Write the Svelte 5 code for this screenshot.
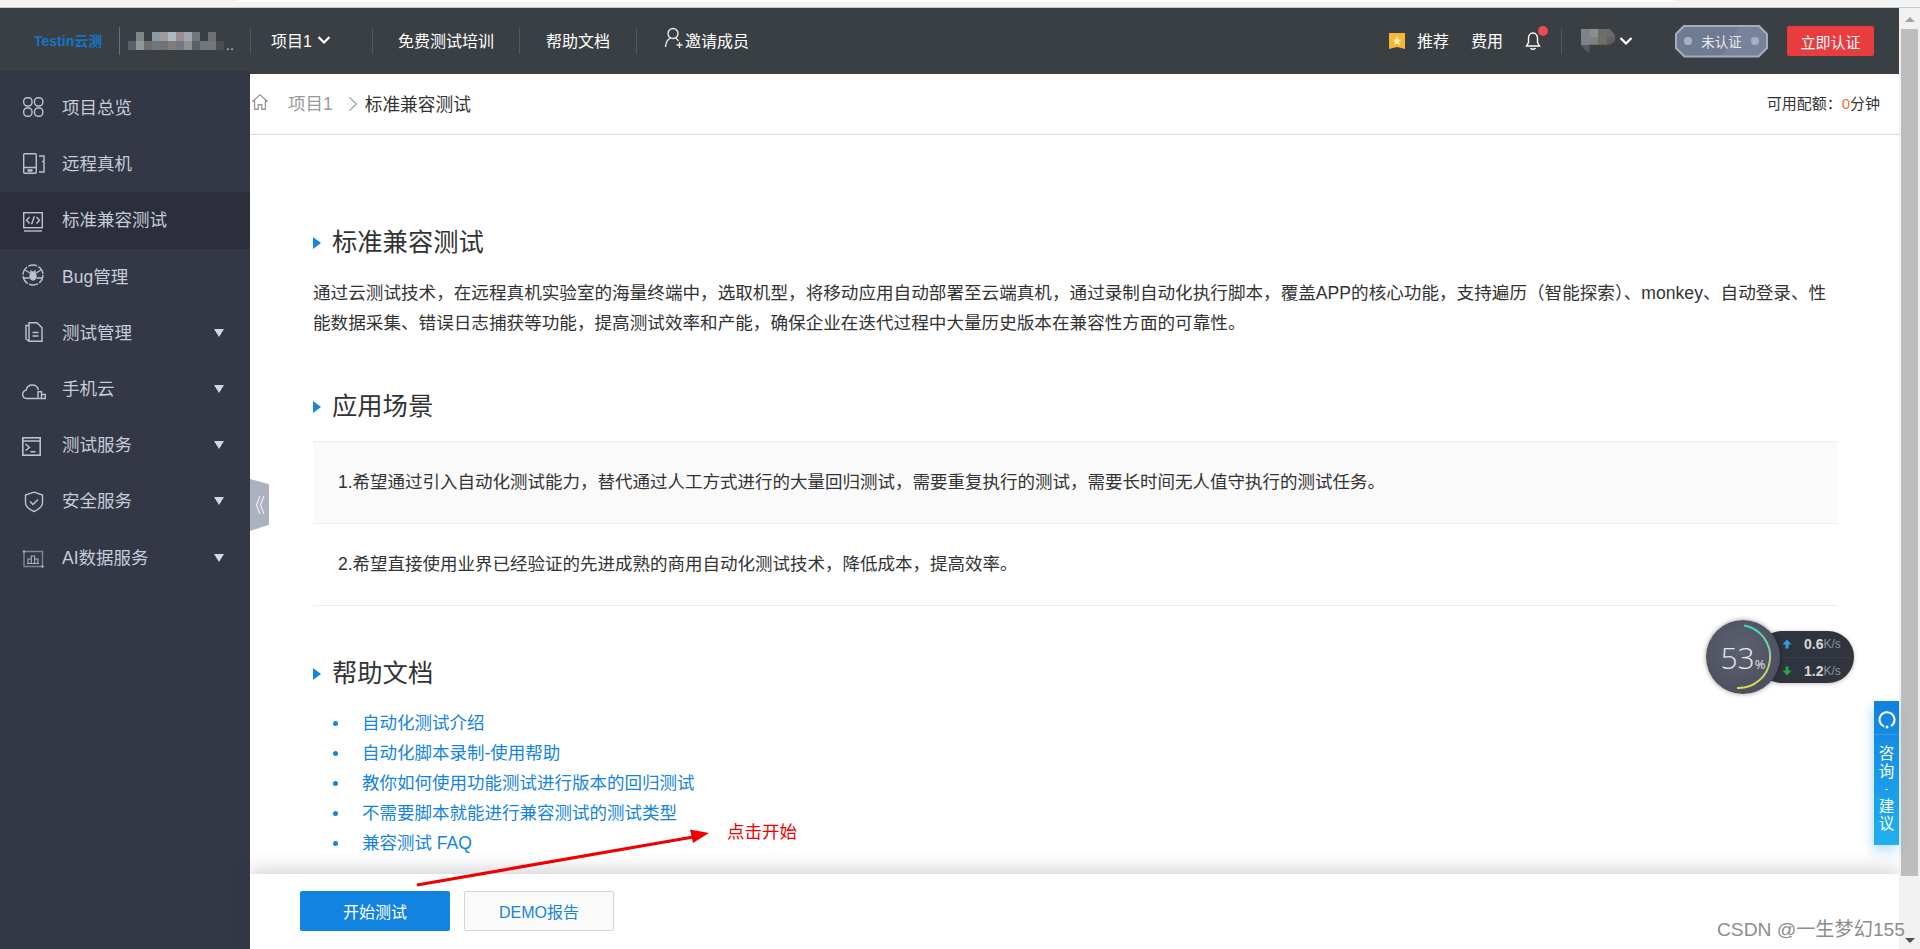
<script>
  const navItems = [
    { label: "项目总览", icon: "grid" },
    { label: "远程真机", icon: "device" },
    { label: "标准兼容测试", icon: "code", active: true },
    { label: "Bug管理", icon: "bug" },
    { label: "测试管理", icon: "doc", arrow: true },
    { label: "手机云", icon: "cloud", arrow: true },
    { label: "测试服务", icon: "term", arrow: true },
    { label: "安全服务", icon: "shield", arrow: true },
    { label: "AI数据服务", icon: "chart", arrow: true }
  ];

  const helpLinks = [
    "自动化测试介绍",
    "自动化脚本录制-使用帮助",
    "教你如何使用功能测试进行版本的回归测试",
    "不需要脚本就能进行兼容测试的测试类型",
    "兼容测试 FAQ"
  ];

  // mosaic over the account name
  const none = "transparent";
  const blurCells = [
    none, "#808587", none, "#8c98a4", "#a09a9e", "#a8bcc4", "#9a8c94", "#a4a4b0", "#6f7880", none, "#6f7070", none,
    "#55626c", "#929898", "#726c72", "#70767a", "#70737a", "#7f8070", "#727886", "#8e928c", "#5a6065", "#70767c", "#747878", "#4a4f52"
  ];
  const avatarCells = [
    "#7d8387", "#8e8e8e", "#6d6d6d", "#6a6a6a",
    "#7e8286", "#7f7f7f", "#706c6a", "#5f6063",
    "#555a5e", "#50565a", none, none
  ];
</script>

<div class="page">
  <div class="chrome"><div class="chrome-tab"></div></div>

  <div class="body">
    <div class="main">
      <header class="topbar">
        <span class="logo">Testin云测</span>
        <span class="vline logo-line"></span>
        <div class="mosaic">
          {#each blurCells as c}
            <i style="background:{c}"></i>
          {/each}
        </div>
        <span class="dots">..</span>
        <span class="vline"></span>
        <span class="tn project">项目1
          <svg class="chev" viewBox="0 0 14 10"><path d="M1.5 2 7 7.5 12.5 2" fill="none" stroke="#fff" stroke-width="2.2"/></svg>
        </span>
        <span class="vline"></span>
        <span class="tn train">免费测试培训</span>
        <span class="vline"></span>
        <span class="tn help">帮助文档</span>
        <span class="vline"></span>
        <span class="tn invite">
          <svg class="user" viewBox="0 0 20 22"><circle cx="9" cy="6.5" r="5" fill="none" stroke="#e8eaec" stroke-width="1.4"/><path d="M1.5 20c.5-5 3-8 5-8.8M11.5 11.2c1.2.5 2.3 1.5 3 2.8" fill="none" stroke="#e8eaec" stroke-width="1.4"/><path d="M12.5 18h6M15.5 15v6" stroke="#e8eaec" stroke-width="1.4"/></svg>
          邀请成员
        </span>

        <div class="top-right">
          <svg class="star" viewBox="0 0 16 16"><path d="M0 0H16V16L8 14 0 16Z" fill="#f7b733"/><path d="M8 3.5 9.3 6.4 12.4 6.7 10 8.8 10.8 11.9 8 10.2 5.2 11.9 6 8.8 3.6 6.7 6.7 6.4Z" fill="#fff2c0"/></svg>
          <span class="tn rec">推荐</span>
          <span class="tn fee">费用</span>
          <span class="bell">
            <svg viewBox="0 0 16 20"><path d="M8 2c-3 0-4.5 2.5-4.5 5v4.500L1.5 15h13l-2-3.500V7C12.500 4.500 11 2 8 2Z" fill="none" stroke="#fff" stroke-width="1.4"/><path d="M5.500 17c.8 1.600 4.200 1.600 5 0" fill="none" stroke="#fff" stroke-width="1.4"/></svg>
            <b></b>
          </span>
          <span class="vline rline"></span>
          <div class="avatar">
            {#each avatarCells as c}
              <i style="background:{c}"></i>
            {/each}
          </div>
          <svg class="chev rchev" viewBox="0 0 14 10"><path d="M1.5 2 7 7.5 12.5 2" fill="none" stroke="#fff" stroke-width="2.2"/></svg>
          <span class="badge"><span class="badge-in"><i></i>未认证<i></i></span></span>
          <button class="verify">立即认证</button>
        </div>
      </header>

      <div class="lower">
        <nav class="sidebar">
          {#each navItems as item}
            <div class="nav-item" class:active={item.active}>
              <svg class="nav-icon" viewBox="0 0 24 24" fill="none" stroke="#bcc3d0" stroke-width="1.4">
                {#if item.icon === "grid"}
                  <rect x="1.7" y="1.7" width="8.3" height="8.3" rx="3.5"/><rect x="12.5" y="1.7" width="8.3" height="8.3" rx="3.5"/><rect x="1.7" y="12" width="8.3" height="8.3" rx="3.5"/><rect x="12.5" y="12" width="8.3" height="8.3" rx="3.5"/>
                {:else if item.icon === "device"}
                  <rect x="1.7" y="1.7" width="12.6" height="19.6" rx="1"/><path d="M5.5 18.5h5" stroke-width="2.5"/><path d="M2 15.5h12M17 4h5v5.500h-2M20 9.500h2V20h-5"/>
                {:else if item.icon === "code"}
                  <rect x="1.7" y="4.7" width="18.6" height="15"/><path d="M2 23h18"/><path d="M7.5 9 4.5 12.2 7.5 15.5M14.5 9l3 3.200-3 3.300M12.400 8.200l-2.800 8"/>
                {:else if item.icon === "bug"}
                  <circle cx="11" cy="11" r="10" stroke-dasharray="9 1.5"/><ellipse cx="11" cy="12" rx="3" ry="4" fill="#bcc3d0"/><path d="M3 6l5 3M19 6l-5 3M2 14h5.500M20 14h-5.500M8.500 6.500l1 1.500M13.500 6.500l-1 1.500"/>
                {:else if item.icon === "doc"}
                  <path d="M7 2.7h8l5 5V21.3H7ZM7 5.500H4V19l3 2.300"/><path d="M10.500 12.500h6M10.500 16h6"/>
                {:else if item.icon === "cloud"}
                  <path d="M15.500 21.500H5C2.500 21.500.7 19.700.7 17.300c0-2.200 1.500-3.800 3.500-4.200C4.700 10 7.200 8 10.200 8c3 0 5.500 2 6.200 5"/><rect x="16" y="14.700" width="3.500" height="6.800"/><path d="M19.500 17.500h3.800v4h-3.800"/>
                {:else if item.icon === "term"}
                  <rect x=".8" y="4.800" width="17.400" height="17.400" stroke-width="1.600"/><path d="M.8 8h17.400" stroke-width="1.500"/><path d="M3.500 11 7.500 14.500 3.500 17.500M8.500 18.800h5"/>
                {:else if item.icon === "shield"}
                  <path d="M12 3.200 20.500 6v7.500c0 4-3.800 7-8.500 9-4.700-2-8.500-5-8.500-9V6Z"/><path d="M8 12.500l3 3 5-5"/>
                {:else}
                  <path d="M2 6.500H20.500V21.500H2Z" stroke="#7f8594"/><circle cx="2" cy="6.500" r="1.200" fill="#aab0bd" stroke="none"/><circle cx="20.500" cy="21.500" r="1.200" fill="#aab0bd" stroke="none"/><path d="M6 18V14h3.300v4M9.300 18V11h3.300v7M12.600 18V14h3.300v4M5 18.500h12" stroke="#aab0bd" stroke-width="1.100"/>
                {/if}
              </svg>
              <span class="nav-label">{item.label}</span>
              {#if item.arrow}<span class="nav-arrow"></span>{/if}
            </div>
          {/each}
          <div class="collapse">
            <svg viewBox="0 0 10 20"><path d="M5 1 1.500 10 5 19M9 1 5.500 10 9 19" fill="none" stroke="#f2f3f6" stroke-width="1.100"/></svg>
          </div>
        </nav>

        <div class="pane">
          <div class="crumbs">
            <svg class="home" viewBox="0 0 20 20"><path d="M1.500 9.500 10 2l8.500 7.500M4 8v10h4v-5h4v5h4V8" fill="none" stroke="#9a9a9a" stroke-width="1.500"/></svg>
            <span class="crumb-parent">项目1</span>
            <svg class="crumb-sep" viewBox="0 0 10 16"><path d="M1.500 1.500 8.500 8l-7 6.500" fill="none" stroke="#999" stroke-width="1.100"/></svg>
            <span class="crumb-now">标准兼容测试</span>
            <span class="quota">可用配额：<em>0</em>分钟</span>
          </div>

          <div class="content">
            <h2>标准兼容测试</h2>
            <p class="intro">通过云测试技术，在远程真机实验室的海量终端中，选取机型，将移动应用自动部署至云端真机，通过录制自动化执行脚本，覆盖APP的核心功能，支持遍历（智能探索）、monkey、自动登录、性能数据采集、错误日志捕获等功能，提高测试效率和产能，确保企业在迭代过程中大量历史版本在兼容性方面的可靠性。</p>

            <h2>应用场景</h2>
            <div class="scenes">
              <div class="scene odd">1.希望通过引入自动化测试能力，替代通过人工方式进行的大量回归测试，需要重复执行的测试，需要长时间无人值守执行的测试任务。</div>
              <div class="scene">2.希望直接使用业界已经验证的先进成熟的商用自动化测试技术，降低成本，提高效率。</div>
            </div>

            <h2>帮助文档</h2>
            <ul class="links">
              {#each helpLinks as link}
                <li>{link}</li>
              {/each}
            </ul>
          </div>

          <footer class="actions">
            <button class="start">开始测试</button>
            <button class="demo">DEMO报告</button>
          </footer>
        </div>
      </div>
    </div>

    <div class="scrollbar">
      <span class="up"></span>
      <div class="thumb"></div>
      <span class="down"></span>
    </div>
  </div>

  <!-- things lying over the page -->
  <svg class="arrow" viewBox="0 0 300 60">
    <path d="M2 56 284 7" stroke="#f00000" stroke-width="3.2"/>
    <path d="M294 4 275 .5 278 14Z" fill="#f00000"/>
  </svg>
  <span class="note">点击开始</span>

  <div class="speed">
    <div class="pill">
      <div class="rate">
        <svg viewBox="0 0 10 10"><path d="M5 .5 9.500 5.500H6.500V9.500H3.500V5.500H.5Z" fill="#2f9fde"/></svg>
        <b>0.6</b><small>K/s</small>
      </div>
      <div class="rate">
        <svg viewBox="0 0 10 10"><path d="M5 9.500 .5 4.500H3.500V.5H6.500V4.500H9.500Z" fill="#22a83c"/></svg>
        <b>1.2</b><small>K/s</small>
      </div>
    </div>
    <div class="dial">
      <svg viewBox="0 0 74 74">
        <defs>
          <linearGradient id="ring" x1="0" y1="0" x2="0" y2="1">
            <stop offset="0" stop-color="#3fd6c2"/><stop offset="1" stop-color="#e1d94f"/>
          </linearGradient>
        </defs>
        <path d="M38 5.500A31.500 31.500 0 0 1 31 68" fill="none" stroke="url(#ring)" stroke-width="2"/>
      </svg>
      <span class="pct">53<small>%</small></span>
    </div>
  </div>

  <div class="consult">
    <svg viewBox="0 0 18 18"><path d="M6 15.500A7.500 7.500 0 1 1 13 15" fill="none" stroke="#fff" stroke-width="2"/><circle cx="9" cy="16" r="1.500" fill="#fff"/></svg>
    <span class="c-line"></span>
    <span>咨</span><span>询</span><span class="c-dot">-</span><span>建</span><span>议</span>
  </div>

  <span class="mark">CSDN @一生梦幻155</span>
</div>

<style>
  :global(body) {
    margin: 0;
    background: #fff;
  }

  .page {
    position: relative;
    width: 1920px;
    height: 949px;
    overflow: hidden;
    display: flex;
    flex-direction: column;
    font-family: "Liberation Sans", "Noto Sans CJK SC", sans-serif;
  }

  .chrome {
    height: 7px;
    flex: none;
    background: #f3f3f3;
    border-bottom: 1px solid #c9c9c9;
  }

  .chrome-tab {
    width: 1438px;
    height: 2px;
    margin-left: 237px;
    background: #fff;
  }

  .body {
    flex: 1;
    display: flex;
    min-height: 0;
  }

  .main {
    flex: 1;
    min-width: 0;
    display: flex;
    flex-direction: column;
  }

  /* header */
  .topbar {
    height: 66px;
    flex: none;
    display: flex;
    align-items: center;
    padding-left: 34px;
    padding-right: 25px;
    background: #3a3f44;
    color: #fff;
    font-size: 16px;
  }

  .logo {
    width: 72px;
    margin-top: -2px;
    color: #1474c4;
    font-size: 14px;
    font-weight: 700;
    white-space: nowrap;
  }

  .vline {
    width: 1px;
    height: 26px;
    background: #52575c;
  }

  .logo-line {
    margin-left: 13px;
    margin-right: 8px;
    height: 28px;
    background: #6a6f74;
  }

  .mosaic {
    width: 96px;
    height: 18px;
    display: grid;
    grid-template-columns: repeat(12, 8px);
    grid-template-rows: repeat(2, 9px);
  }

  .dots {
    width: 26px;
    padding-left: 2px;
    box-sizing: border-box;
    margin-top: 8px;
    color: #cfd2d4;
    font-size: 14px;
  }

  .tn {
    white-space: nowrap;
    display: flex;
    align-items: center;
    margin-top: -2px;
  }

  .project {
    margin-left: 20px;
    width: 101px;
  }

  .chev {
    width: 14px;
    height: 10px;
  }

  .project .chev {
    margin-left: 5px;
  }

  .train {
    margin-left: 25px;
    margin-right: 25px;
  }

  .help {
    margin-left: 26px;
    margin-right: 26px;
  }

  .invite {
    margin-left: 27px;
    margin-top: -3px;
  }

  .user {
    width: 20px;
    height: 22px;
    margin-right: 1px;
    margin-top: -4px;
  }

  .top-right {
    margin-left: auto;
    display: flex;
    align-items: center;
  }

  .star {
    width: 16px;
    height: 16px;
    margin-right: 12px;
  }

  .rec {
    margin-right: 22px;
  }

  .fee {
    margin-right: 22px;
  }

  .bell {
    position: relative;
    width: 16px;
    height: 20px;
  }

  .bell svg {
    width: 16px;
    height: 20px;
    display: block;
  }

  .bell b {
    position: absolute;
    top: -5px;
    left: 13px;
    width: 10px;
    height: 10px;
    border-radius: 50%;
    background: #ee4b50;
  }

  .rline {
    margin-left: 20px;
    margin-right: 19px;
  }

  .avatar {
    width: 34px;
    height: 24px;
    display: grid;
    grid-template-columns: repeat(4, 1fr);
    grid-template-rows: repeat(3, 8px);
    clip-path: polygon(0 0, 85% 0, 100% 25%, 100% 50%, 85% 66%, 25% 66%, 25% 100%, 10% 85%, 0 66%);
  }

  .rchev {
    margin-left: 4px;
    margin-right: 42px;
  }

  .badge {
    width: 93px;
    height: 33px;
    padding: 2px;
    box-sizing: border-box;
    background: #a6abb7;
    clip-path: polygon(9px 0, calc(100% - 9px) 0, 100% 9px, 100% calc(100% - 9px), calc(100% - 9px) 100%, 9px 100%, 0 calc(100% - 9px), 0 9px);
  }

  .badge-in {
    height: 100%;
    display: flex;
    align-items: center;
    justify-content: space-between;
    padding: 0 7px;
    color: #e9ebef;
    font-size: 13.5px;
    background: linear-gradient(120deg, #6f7b92 0 58%, #76839b 58%);
    clip-path: polygon(8px 0, calc(100% - 8px) 0, 100% 8px, 100% calc(100% - 8px), calc(100% - 8px) 100%, 8px 100%, 0 calc(100% - 8px), 0 8px);
  }

  .badge i {
    width: 8px;
    height: 8px;
    border-radius: 50%;
    background: #a9b0be;
  }

  .verify {
    margin-left: 19px;
    width: 87px;
    height: 30px;
    border: none;
    border-radius: 2px;
    padding: 0;
    background: #e83c3e;
    color: #fff;
    font: inherit;
    font-size: 15px;
  }

  /* below the header */
  .lower {
    flex: 1;
    min-height: 0;
    display: flex;
  }

  .sidebar {
    position: relative;
    width: 250px;
    flex: none;
    margin-top: -3px;
    padding-top: 9px;
    box-sizing: border-box;
    background: #343746;
  }

  .nav-item {
    height: 56.2px;
    display: flex;
    align-items: center;
    padding-left: 22px;
    color: #c5ccda;
    font-size: 17.5px;
  }

  .nav-item.active {
    background: #2c2f3b;
  }

  .nav-icon {
    width: 24px;
    height: 24px;
    flex: none;
    margin-right: 16px;
    margin-top: -1px;
    overflow: visible;
  }

  .nav-label {
    white-space: nowrap;
    margin-top: -3px;
  }

  .nav-arrow {
    margin-left: auto;
    margin-right: 26px;
    width: 0;
    height: 0;
    border-left: 5px solid transparent;
    border-right: 5px solid transparent;
    border-top: 8px solid #d4d7de;
  }

  .collapse {
    position: absolute;
    left: 250px;
    top: 408px;
    width: 19px;
    height: 52px;
    display: flex;
    align-items: center;
    justify-content: center;
    background: #acb1be;
    clip-path: polygon(0 0, 100% 10%, 100% 88%, 0 100%);
  }

  .collapse svg {
    width: 10px;
    height: 20px;
  }

  .pane {
    flex: 1;
    min-width: 0;
    display: flex;
    flex-direction: column;
    background: #fff;
  }

  .crumbs {
    height: 61px;
    flex: none;
    box-sizing: border-box;
    display: flex;
    align-items: center;
    padding-right: 19px;
    padding-bottom: 3px;
    border-bottom: 1px solid #d9d9d9;
  }

  .home {
    width: 18px;
    height: 18px;
    margin-left: 1px;
    margin-top: -1px;
  }

  .crumb-parent {
    margin-left: 19px;
    color: #999;
    font-size: 17.5px;
  }

  .crumb-sep {
    width: 10px;
    height: 16px;
    margin-left: 15px;
    margin-top: 3px;
  }

  .crumb-now {
    margin-left: 7px;
    color: #333;
    font-size: 17.7px;
  }

  .quota {
    margin-left: auto;
    color: #333;
    font-size: 15px;
  }

  .quota em {
    font-style: normal;
    color: #f5713c;
  }

  .content {
    flex: 1;
    min-height: 0;
    overflow: hidden;
    padding: 92px 61px 0 63px;
  }

  h2 {
    position: relative;
    margin: 0;
    padding-left: 19px;
    height: 30px;
    line-height: 30px;
    color: #333;
    font-size: 25.3px;
    font-weight: 400;
  }

  h2::before {
    content: "";
    position: absolute;
    left: 0;
    top: 10px;
    border-left: 8px solid #1583e1;
    border-top: 6px solid transparent;
    border-bottom: 6px solid transparent;
  }

  .intro {
    margin: 21px 0 53px;
    color: #333;
    font-size: 17.6px;
    line-height: 30px;
  }

  .scenes {
    margin: 20px 0 52px;
    border-top: 1px solid #eee;
  }

  .scene {
    height: 81px;
    line-height: 80px;
    padding-left: 25px;
    color: #333;
    font-size: 17.5px;
    border-bottom: 1px solid #eee;
  }

  .scene.odd {
    background: #fafafa;
  }

  .links {
    margin: 20px 0 0;
    padding: 0 0 0 49px;
    list-style: none;
    color: #1583e1;
    font-size: 17.5px;
    line-height: 30px;
  }

  .links li {
    position: relative;
  }

  .links li::before {
    content: "";
    position: absolute;
    left: -29px;
    top: 13px;
    width: 5px;
    height: 5px;
    border-radius: 50%;
    background: #1583e1;
  }

  .actions {
    position: relative;
    height: 75px;
    flex: none;
    display: flex;
    align-items: flex-start;
    gap: 14px;
    padding: 17px 0 0 50px;
    box-sizing: border-box;
    background: #fff;
    box-shadow: 0 -6px 16px rgba(50, 60, 70, 0.2);
  }

  .actions button {
    width: 150px;
    height: 40px;
    border-radius: 2px;
    padding: 0;
    font: inherit;
    font-size: 16px;
  }

  .start {
    border: none;
    background: #1283e0;
    color: #fff;
  }

  .demo {
    border: 1px solid #d5d5d5;
    background: #fafafa;
    color: #1583e1;
  }

  /* scrollbar */
  .scrollbar {
    position: relative;
    width: 21px;
    flex: none;
    background: #f1f1f1;
  }

  .thumb {
    position: absolute;
    left: 2px;
    top: 21px;
    width: 17px;
    height: 847px;
    background: #bdbdbd;
  }

  .up, .down {
    position: absolute;
    left: 6px;
    width: 0;
    height: 0;
    border-left: 5px solid transparent;
    border-right: 5px solid transparent;
  }

  .up {
    top: 9px;
    border-bottom: 5px solid #a3a3a3;
  }

  .down {
    bottom: 6px;
    border-top: 5px solid #505050;
  }

  /* overlays */
  .arrow {
    position: absolute;
    left: 415px;
    top: 829px;
    width: 300px;
    height: 60px;
  }

  .note {
    position: absolute;
    left: 727px;
    top: 820px;
    color: #f00000;
    font-size: 17.5px;
    line-height: 24px;
  }

  .speed {
    position: absolute;
    left: 1706px;
    top: 620px;
    width: 148px;
    height: 74px;
  }

  .pill {
    position: absolute;
    left: 50px;
    top: 11px;
    width: 98px;
    height: 52px;
    box-sizing: border-box;
    padding-left: 26px;
    border-radius: 26px;
    background: #30343f;
    box-shadow: 0 1px 4px rgba(0, 0, 0, 0.25);
  }

  .rate {
    height: 26px;
    display: flex;
    align-items: center;
    color: #d8d8d8;
    font-size: 14px;
    white-space: nowrap;
  }

  .rate svg {
    width: 10px;
    height: 10px;
    margin-right: 12px;
  }

  .rate + .rate {
    border-top: 1px solid #3a3e49;
  }

  .rate small {
    color: #8f929a;
    font-size: 12px;
  }

  .dial {
    position: absolute;
    left: 0;
    top: 0;
    width: 74px;
    height: 74px;
    border-radius: 50%;
    background: radial-gradient(circle at 45% 40%, #5d6070, #474a58);
    box-shadow: 0 0 5px rgba(0, 0, 0, 0.4);
    display: flex;
    align-items: center;
    justify-content: center;
    color: #e6e6e6;
    font-family: "Open Sans", sans-serif;
    font-size: 30px;
    font-weight: 300;
  }

  .dial svg {
    position: absolute;
    inset: 0;
  }

  .pct small {
    font-size: 13px;
    font-weight: 400;
  }

  .consult {
    position: absolute;
    left: 1874px;
    top: 701px;
    width: 25px;
    height: 144px;
    display: flex;
    flex-direction: column;
    align-items: center;
    color: #fff;
    font-size: 15.5px;
    line-height: 17.5px;
    background: linear-gradient(#1180df, #21b0f0);
    box-shadow: -2px 6px 12px rgba(33, 150, 240, 0.3);
  }

  .consult svg {
    width: 18px;
    height: 18px;
    margin-top: 10px;
  }

  .c-line {
    width: 100%;
    height: 1px;
    margin: 5px 0 10px;
    background: rgba(255, 255, 255, 0.15);
  }

  .c-dot {
    font-size: 10px;
  }

  .mark {
    position: absolute;
    left: 1717px;
    top: 917px;
    color: #8c8c8c;
    font-size: 19.2px;
    line-height: 26px;
    white-space: nowrap;
  }
</style>
